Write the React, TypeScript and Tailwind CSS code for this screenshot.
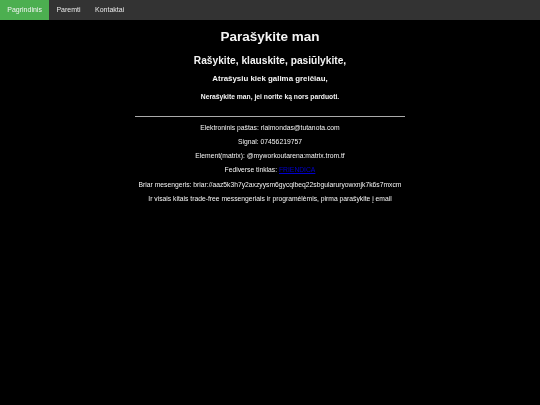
export default function App() {
  const navItems = ["Pagrindinis", "Paremti", "Kontaktai"];

  return (
    <div className="min-h-[405px] bg-black text-[#f4f4f4] font-['Liberation_Sans',Arial,sans-serif] [will-change:transform]">
      <nav className="flex h-5 bg-[#333333]">
        {navItems.map((item, i) => (
          <a
            key={item}
            className={`flex items-center px-[7.25px] text-[7px] ${i === 0 ? "bg-[#4caf50]" : "text-[#e8e8e8]"}`}
          >
            {item}
          </a>
        ))}
      </nav>

      <div className="text-center">
        <h1 className="mt-[9px] text-[13.5px] leading-[16px] font-bold">Parašykite man</h1>
        <h2 className="mt-[9px] text-[10.2px] leading-[13px] font-bold">Rašykite, klauskite, pasiūlykite,</h2>
        <h3 className="mt-[7px] text-[7.9px] leading-[10px] font-bold">Atrašysiu kiek galima greičiau,</h3>
        <h4 className="mt-[9px] text-[6.75px] leading-[8px] font-bold">Nerašykite man, jei norite ką nors parduoti.</h4>

        <hr className="mx-auto mt-[15px] w-[270px] border-[#aaaaaa]" />

        <div className="mt-[7px] flex flex-col gap-[6.15px] text-[6.75px] leading-[8px]">
          <p>Elektroninis paštas: rlaimondas@tutanota.com</p>
          <p>Signal: 07456219757</p>
          <p>Element(matrix): @myworkoutarena:matrix.trom.tf</p>
          <p>
            Fediverse tinklas: <a className="text-[#0000cc] underline">FRIENDICA</a>
          </p>
          <p>Briar mesengeris: briar://aaz5k3h7y2axzyysm6gycqlbeq22sbgularuryowxnjk7k6s7mxcm</p>
          <p>Ir visais kitais trade-free messengeriais ir programėlėmis, pirma parašykite į email</p>
        </div>
      </div>
    </div>
  );
}
